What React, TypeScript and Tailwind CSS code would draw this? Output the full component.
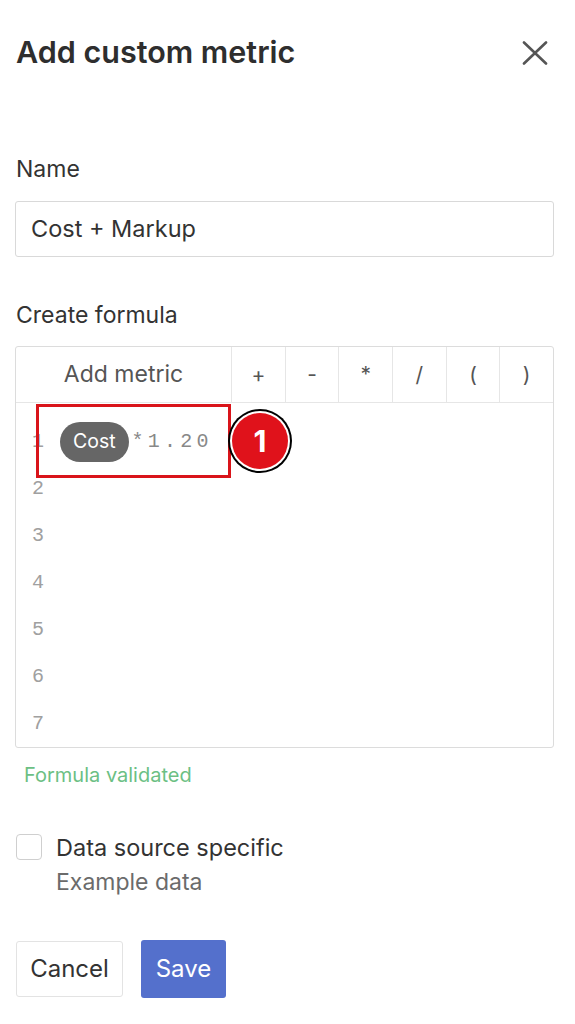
import React from 'react';

const ops = ['+', '-', '*', '/', '(', ')'];
const lines = [1, 2, 3, 4, 5, 6, 7];

const CloseIcon = () => (
  <svg width="26" height="24" viewBox="0 0 26 24" fill="none" stroke="#555" strokeWidth="2.6" strokeLinecap="round">
    <path d="M2 1.5 L24 22.5" />
    <path d="M24 1.5 L2 22.5" />
  </svg>
);

const App = () => {
  return (
    <div className="w-[575px] h-[1024px] bg-white font-['Inter',sans-serif] text-[#333] pl-[15px] pr-[21px]">
      {/* Header */}
      <div className="pt-[34px] h-[70px] flex items-center justify-between">
        <h1 className="pl-[1px] text-[30.5px] leading-[36px] font-semibold text-[#2e2e2e]">Add custom metric</h1>
        <button className="mr-[6px] mt-[1px]">
          <CloseIcon />
        </button>
      </div>

      {/* Name */}
      <div className="mt-[85px] pl-[1px] text-[23px] leading-[28px]">Name</div>
      <div className="mt-[18px] h-[56px] border border-[#d9d9d9] rounded-[3px] flex items-center px-[15px] text-[23.5px] text-[#333]">
        Cost + Markup
      </div>

      {/* Formula */}
      <div className="mt-[44px] pl-[1px] text-[23px] leading-[28px]">Create formula</div>
      <div className="mt-[17px] relative h-[402px] border border-[#dcdcdc] rounded-[3px]">
        <div className="flex h-[56px] border-b border-[#e6e6e6]">
          <div className="w-[216px] flex items-center justify-center text-[23px] text-[#555] border-r border-[#e6e6e6]">
            Add metric
          </div>
          {ops.map((op, i) => (
            <div
              key={op}
              className={`flex-1 flex items-center justify-center text-[21px] text-[#555] ${i < ops.length - 1 ? 'border-r border-[#e6e6e6]' : ''}`}
            >
              {op}
            </div>
          ))}
        </div>

        <div className="pt-[15px]">
          {lines.map((n) => (
            <div key={n} className="h-[47px] flex items-center">
              <span className="w-[44px] pl-[16px] font-['Liberation_Mono',monospace] text-[20px] text-[#a0a0a0]">{n}</span>
              {n === 1 && (
                <div className="flex items-center">
                  <span className="h-[40px] px-[13px] rounded-full bg-[#666] text-white text-[19.5px] flex items-center">Cost</span>
                  <span className="ml-[3px] font-['Liberation_Mono',monospace] text-[20px] text-[#888] tracking-[4.2px]">*1.20</span>
                </div>
              )}
            </div>
          ))}
        </div>

        {/* annotation */}
        <div className="absolute left-[20px] top-[57px] w-[195px] h-[74px] border-[3px] border-[#d9141a]"></div>
        <div className="absolute left-[212px] top-[62px] w-[64px] h-[64px] rounded-full bg-black p-[2px]">
          <div className="w-full h-full rounded-full bg-white p-[2px]">
            <div className="w-full h-full rounded-full bg-[#e0121b] flex items-center justify-center text-white text-[30px] font-bold">
              1
            </div>
          </div>
        </div>
      </div>

      <div className="mt-[15px] pl-[9px] text-[20px] leading-[24px] text-[#6cbf84]">Formula validated</div>

      {/* Checkbox */}
      <div className="mt-[46px] flex items-start">
        <div className="mt-[1px] ml-[1px] w-[26px] h-[26px] rounded-[4px] border border-[#cfcfcf] bg-white"></div>
        <div className="ml-[14px]">
          <div className="text-[23.5px] leading-[30px] text-[#333]">Data source specific</div>
          <div className="mt-[4px] text-[23px] leading-[30px] text-[#6b6b6b]">Example data</div>
        </div>
      </div>

      {/* Buttons */}
      <div className="mt-[43px] flex items-center gap-[18px] pl-[1px]">
        <button className="h-[56px] w-[107px] rounded-[3px] border border-[#e3e3e3] bg-white text-[24px] text-[#333]">Cancel</button>
        <button className="h-[58px] w-[85px] rounded-[3px] bg-[#5470cc] text-[24px] text-white">Save</button>
      </div>
    </div>
  );
};

export default App;
